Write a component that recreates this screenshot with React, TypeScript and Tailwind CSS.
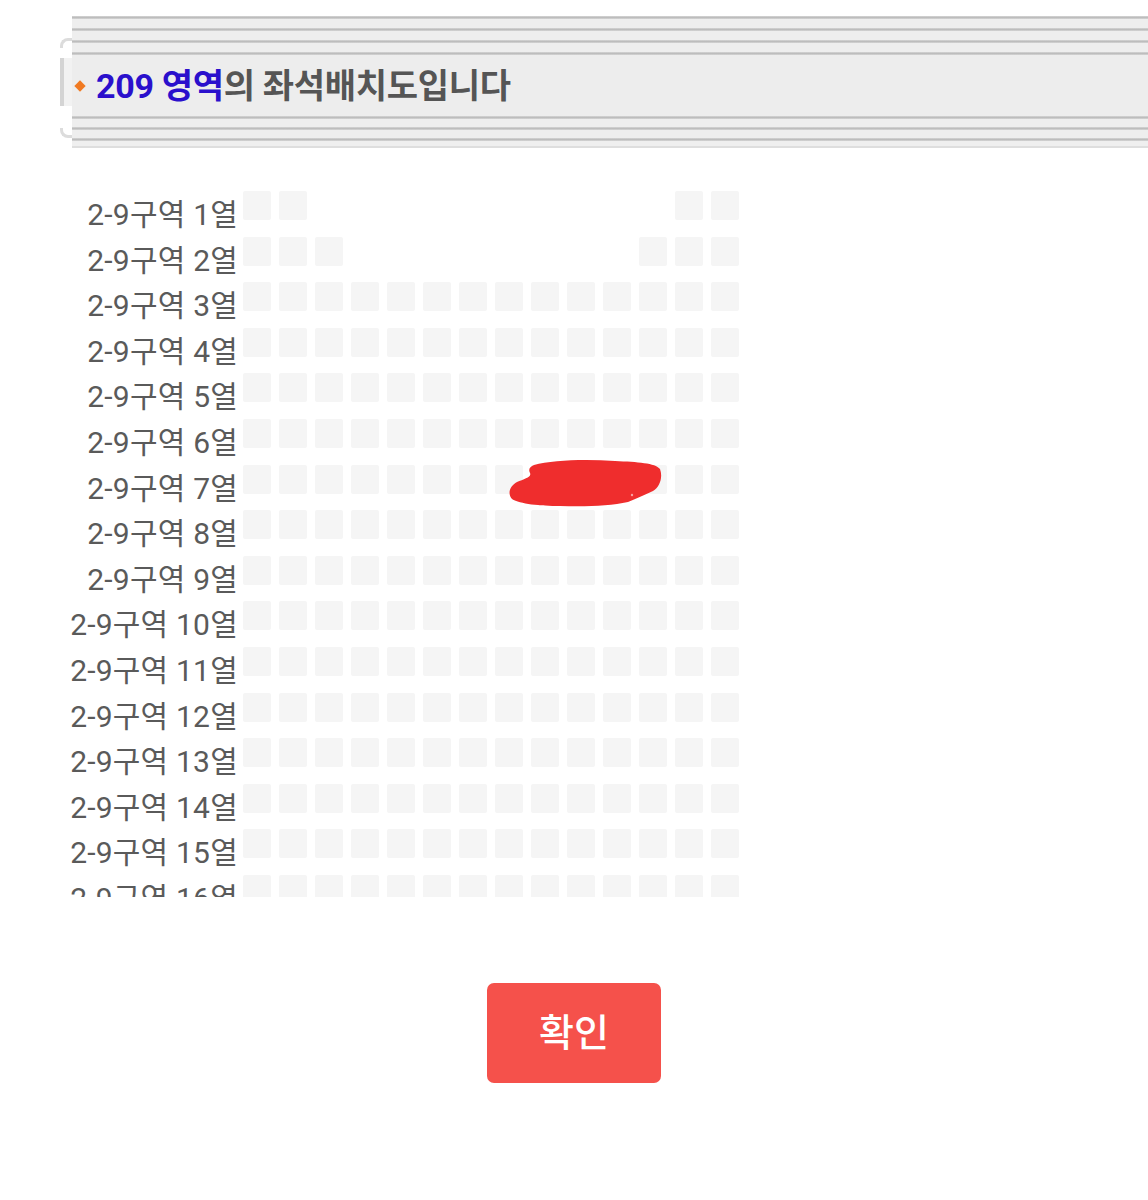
import React from "react";

// 좌석 배치도 화면: 상단 제목 띠, 구역별 열 목록, 확인 버튼
const COLS = 14;
const ROWS = 16;

// 열마다 좌석이 있는 칸 (1부터 시작)
const seatsInRow = (row: number): number[] => {
  if (row === 1) return [1, 2, 13, 14];
  if (row === 2) return [1, 2, 3, 12, 13, 14];
  return Array.from({ length: COLS }, (_, i) => i + 1);
};

const Stripe = () => (
  <div className="h-[3px] bg-gradient-to-b from-[#d6d6d6] via-[#bdbdbd] to-[#d6d6d6]" />
);

const TitleBar = () => {
  return (
    <div className="flex pt-[16px] pl-[60px]">
      {/* 왼쪽 말린 모서리 장식 */}
      <div className="flex w-[12px] flex-col">
        <div className="h-[22px]" />
        <div className="h-[10px] rounded-tl-[8px] border-l-[3px] border-t-[3px] border-[#dcdcdc]" />
        <div className="h-[10px]" />
        <div className="h-[48px] border-l-[4px] border-[#d4d4d4] bg-[#f2f2f2]" />
        <div className="h-[22px]" />
        <div className="h-[10px] rounded-bl-[8px] border-b-[3px] border-l-[3px] border-[#dcdcdc]" />
      </div>
      <div className="flex flex-1 flex-col">
        <Stripe />
        <div className="h-[9px] bg-[#eeeeee]" />
        <Stripe />
        <div className="h-[9px] bg-[#eeeeee]" />
        <Stripe />
        <div className="h-[9px] bg-[#eeeeee]" />
        <Stripe />
        <div className="flex h-[61px] items-center bg-[#ededed]">
          <span className="ml-[4px] h-[8px] w-[8px] rotate-45 bg-[#f07a22]" />
          <h1 className="ml-[12px] text-[34px] font-bold leading-none tracking-[-0.3px]">
            <span className="text-[#2a10cc]">209 영역</span>
            <span className="text-[#555555]">의 좌석배치도입니다</span>
          </h1>
        </div>
        <Stripe />
        <div className="h-[8px] bg-[#eeeeee]" />
        <Stripe />
        <div className="h-[8px] bg-[#eeeeee]" />
        <Stripe />
        <div className="h-[5px] bg-[#efefef]" />
        <div className="h-[2px] bg-[#dedede]" />
      </div>
    </div>
  );
};

const SeatRow = ({ row }: { row: number }) => {
  const seats = seatsInRow(row);
  return (
    <div className="flex h-[45.6px] shrink-0 items-start">
      <div className="mt-[8px] w-[180px] pr-[5px] text-right text-[30px] leading-[32px] tracking-[0.2px] text-[#5a5a5a] whitespace-nowrap">
        2-9구역 {row}열
      </div>
      <div className="grid grid-cols-[repeat(14,28px)] gap-x-[8px]">
        {Array.from({ length: COLS }, (_, i) => i + 1).map((c) =>
          seats.includes(c) ? (
            <div key={c} className="h-[29px] w-[28px] rounded-[2px] bg-[#f5f5f5]" />
          ) : (
            <div key={c} className="h-[29px] w-[28px]" />
          )
        )}
      </div>
    </div>
  );
};

export default function App() {
  return (
    <div
      className="min-h-[1200px] w-[1148px] overflow-hidden bg-white"
      style={{ fontFamily: 'Roboto, "Noto Sans CJK KR", sans-serif' }}
    >
      <TitleBar />

      <div className="relative mt-[43px] flex h-[706px] flex-col overflow-hidden pl-[63px]">
        {Array.from({ length: ROWS }, (_, i) => i + 1).map((r) => (
          <SeatRow key={r} row={r} />
        ))}
        {/* 7열 좌석 위 빨간 낙서 */}
        <svg
          className="absolute left-0 top-0"
          width="1148"
          height="706"
          viewBox="0 192 1148 706"
        >
          <path
            d="M534 466 C552 461 585 460 615 462 C638 463 655 464 660 470 C663 478 660 488 653 492 C645 496 637 499 628 503 C610 507 585 508 560 507 C540 507 520 505 512 500 C507 494 510 487 517 483 C524 480 532 478 530 474 C528 470 530 468 534 466 Z"
            fill="#ef2d2d"
          />
          <circle cx="632" cy="496" r="1.2" fill="#f7a0a0" />
        </svg>
      </div>

      <div className="mt-[86px] flex justify-center">
        <button className="h-[100px] w-[174px] rounded-[7px] bg-[#f5514b] text-[38px] font-medium text-white">
          확인
        </button>
      </div>
    </div>
  );
}
